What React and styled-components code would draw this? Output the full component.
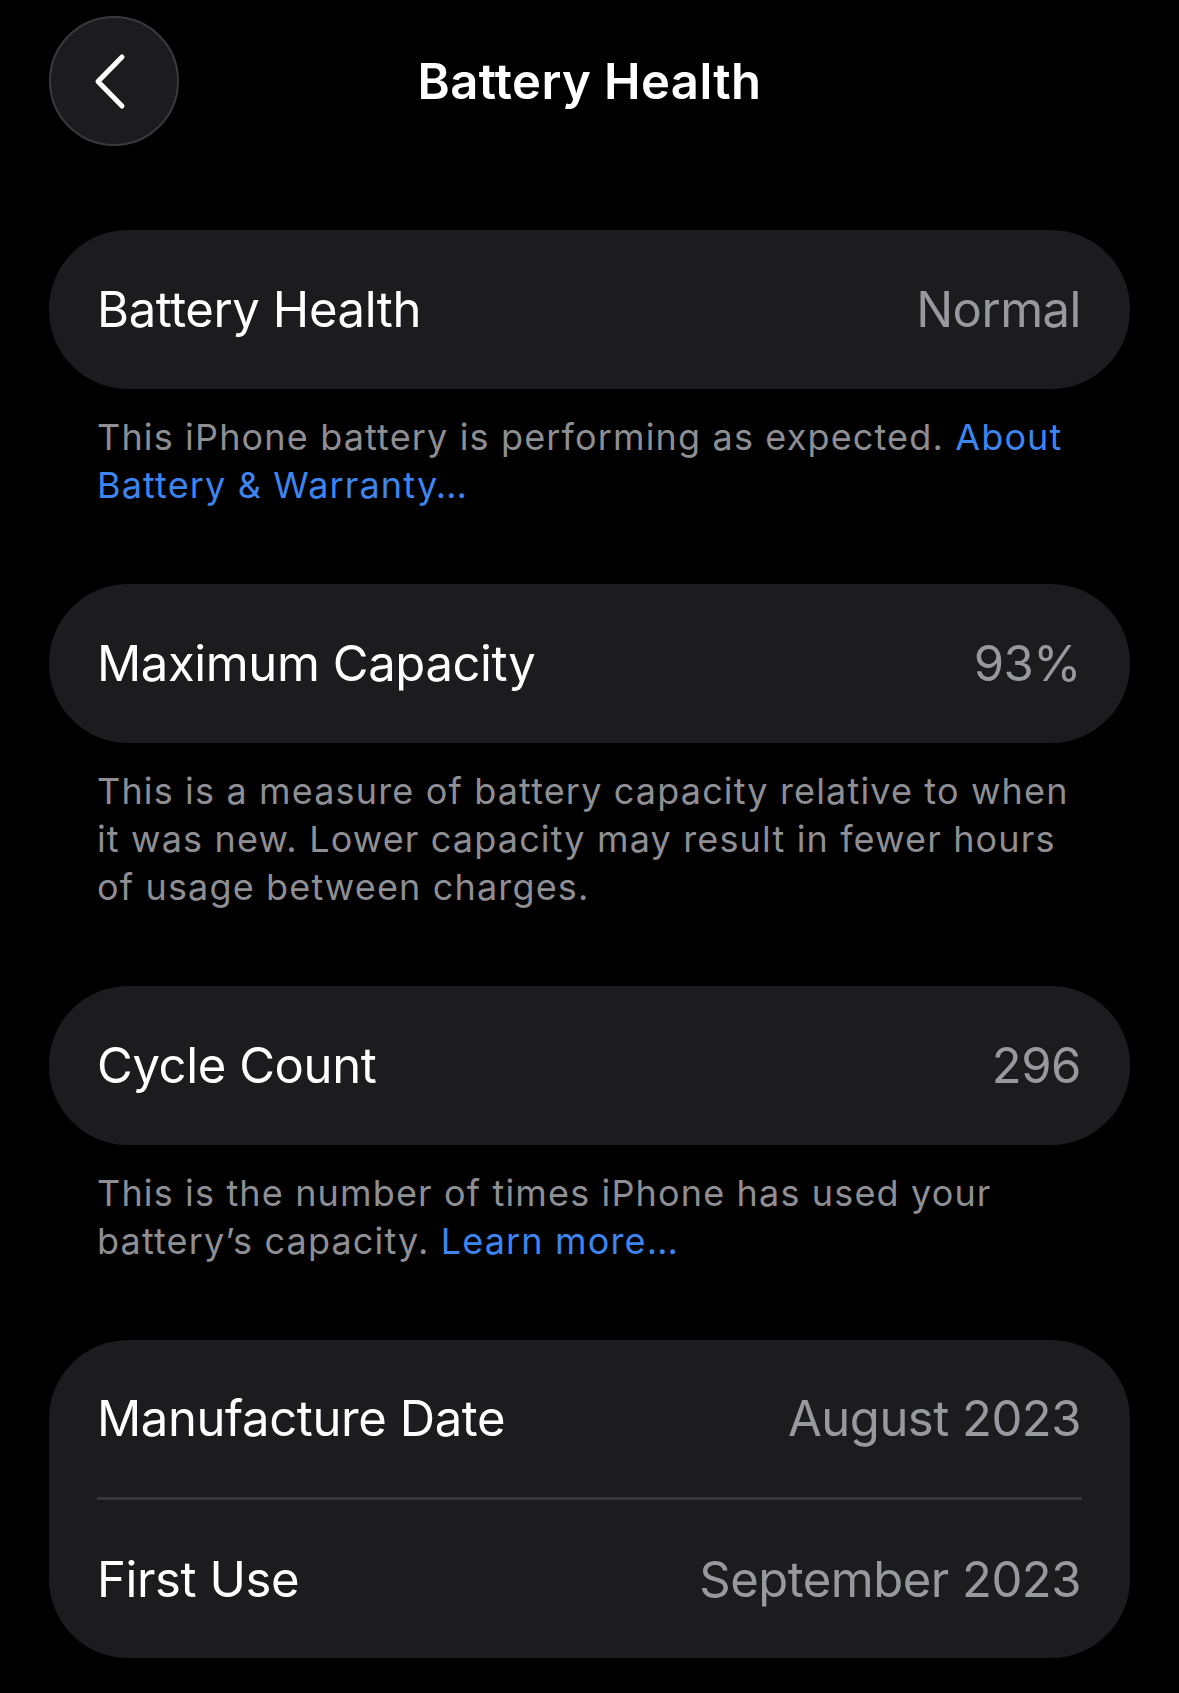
import React from "react";
import styled, { createGlobalStyle } from "styled-components";

const GlobalStyle = createGlobalStyle`
  html, body {
    margin: 0;
    padding: 0;
    background: #000;
  }
  body {
    font-family: Inter, "Noto Sans", "Liberation Sans", sans-serif;
    -webkit-font-smoothing: antialiased;
  }
`;

const Page = styled.div`
  min-height: 1693px;
  background: #000;
  padding: 16px 49px 0;
  box-sizing: border-box;
`;

const NavBar = styled.header`
  display: grid;
  grid-template-columns: 130px 1fr 130px;
  align-items: center;
  height: 130px;
  margin-bottom: 84px;
`;

const BackButton = styled.button`
  width: 130px;
  height: 130px;
  border-radius: 50%;
  background: #1c1c1e;
  border: 2px solid #3a3a3c;
  box-sizing: border-box;
  display: flex;
  align-items: center;
  justify-content: center;
  padding: 0;
  cursor: pointer;
`;

const Title = styled.h1`
  margin: 0;
  text-align: center;
  color: #fff;
  font-size: 49px;
  font-weight: 600;
  letter-spacing: 0.4px;
`;

const Card = styled.section`
  background: #1c1c1e;
  border-radius: 79px;
  overflow: hidden;
`;

const Row = styled.div`
  display: flex;
  align-items: center;
  justify-content: space-between;
  height: ${(p) => p.$height || 159}px;
  padding: 0 49px 0 48px;
`;

const Divider = styled.div`
  height: 3px;
  margin: 0 48px;
  background: #38383a;
`;

const Label = styled.span`
  color: #fff;
  font-size: 49px;
  font-weight: 400;
  letter-spacing: -0.4px;
`;

const Value = styled.span`
  color: #98989f;
  font-size: 49px;
  font-weight: 400;
  letter-spacing: -0.5px;
`;

const Footnote = styled.p`
  margin: 24px 0 75px;
  padding: 0 48px;
  color: #8e8e93;
  font-size: 36px;
  line-height: 48px;
  letter-spacing: 1.15px;
`;

const Link = styled.a`
  color: #3d85ef;
  text-decoration: none;
`;

const Chevron = () => (
  <svg width="40" height="60" viewBox="0 0 40 60" fill="none">
    <path
      d="M28 6 L4 30.5 L28 55"
      stroke="#fff"
      strokeWidth="5"
      strokeLinecap="round"
      strokeLinejoin="round"
    />
  </svg>
);

export default function App() {
  return (
    <>
      <GlobalStyle />
      <Page>
        <NavBar>
          <BackButton aria-label="Back">
            <Chevron />
          </BackButton>
          <Title>Battery Health</Title>
          <span />
        </NavBar>

        <Card>
          <Row>
            <Label>Battery Health</Label>
            <Value>Normal</Value>
          </Row>
        </Card>
        <Footnote>
          This iPhone battery is performing as expected.{" "}
          <Link>About Battery &amp; Warranty…</Link>
        </Footnote>

        <Card>
          <Row>
            <Label>Maximum Capacity</Label>
            <Value>93%</Value>
          </Row>
        </Card>
        <Footnote>
          This is a measure of battery capacity relative to when it was new.
          Lower capacity may result in fewer hours of usage between charges.
        </Footnote>

        <Card>
          <Row>
            <Label>Cycle Count</Label>
            <Value>296</Value>
          </Row>
        </Card>
        <Footnote>
          This is the number of times iPhone has used your battery’s capacity.{" "}
          <Link>Learn more…</Link>
        </Footnote>

        <Card>
          <Row $height={157}>
            <Label>Manufacture Date</Label>
            <Value>August 2023</Value>
          </Row>
          <Divider />
          <Row $height={158}>
            <Label>First Use</Label>
            <Value>September 2023</Value>
          </Row>
        </Card>
      </Page>
    </>
  );
}
